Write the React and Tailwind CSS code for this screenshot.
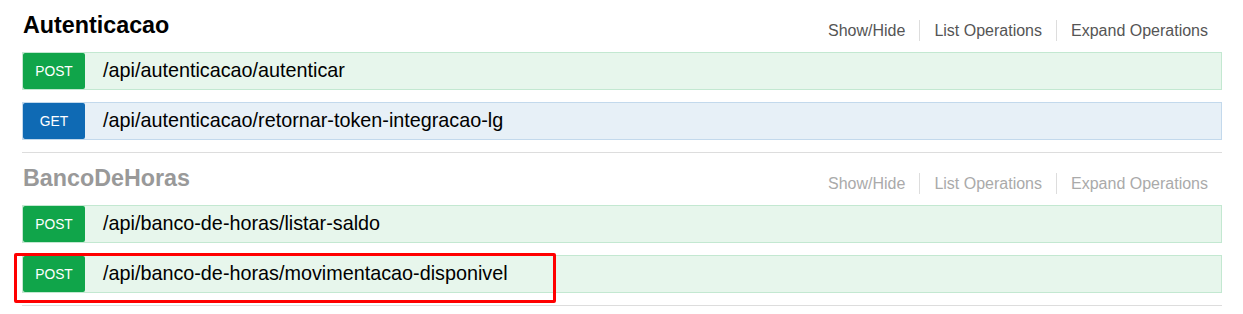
const sections = [
  {
    name: "Autenticacao",
    active: true,
    ops: [
      { method: "POST", path: "/api/autenticacao/autenticar" },
      { method: "GET", path: "/api/autenticacao/retornar-token-integracao-lg" },
    ],
  },
  {
    name: "BancoDeHoras",
    active: false,
    ops: [
      { method: "POST", path: "/api/banco-de-horas/listar-saldo" },
      { method: "POST", path: "/api/banco-de-horas/movimentacao-disponivel", marked: true },
    ],
  },
];

const Operation = ({ method, path, marked }) => {
  const isGet = method === "GET";
  return (
    <div
      className={
        "relative flex items-stretch h-[38px] border " +
        (isGet ? "bg-[#e7f0f7] border-[#c3d9ec]" : "bg-[#e7f6ec] border-[#c3e8d1]")
      }
    >
      <span
        className={
          "flex items-center justify-center w-[62px] pt-[2px] rounded-[2px] text-white text-[13.8px] " +
          (isGet ? "bg-[#0f6ab4]" : "bg-[#10a54a]")
        }
      >
        {method}
      </span>
      <span className="flex items-center pl-[18px] text-[19.8px] text-black">{path}</span>
      {/* annotation box */}
      {marked && (
        <div className="absolute -left-[9px] -top-[3px] w-[542px] h-[50px] border-[3px] border-[#ff0000] rounded-[2px]" />
      )}
    </div>
  );
};

const Section = ({ name, active, ops }) => {
  const links = ["Show/Hide", "List Operations", "Expand Operations"];
  return (
    <div className="border-b border-[#dddddd] pb-[12px]">
      <div className="flex justify-between h-[52px]">
        <h2
          className={
            "pt-[12px] pl-[1px] text-[23.3px] leading-[26px] font-bold " +
            (active ? "text-black" : "text-[#999999]")
          }
        >
          {name}
        </h2>
        <ul className="flex items-start pt-[20px]">
          {links.map((l, i) => (
            <li
              key={l}
              className={
                "px-[14px] h-[21px] text-[16px] leading-[21px] " +
                (i > 0 ? "border-l border-[#dddddd] " : "") +
                (active ? "text-[#555555]" : "text-[#aaaaaa]")
              }
            >
              {l}
            </li>
          ))}
        </ul>
      </div>
      <div className="flex flex-col gap-[12px]">
        {ops.map((op) => (
          <Operation key={op.path} {...op} />
        ))}
      </div>
    </div>
  );
};

export default function App() {
  return (
    <div className="w-[1243px] h-[314px] bg-white pl-[22px] overflow-hidden font-['Liberation_Sans',Arial,sans-serif]">
      <div className="w-[1200px]">
        {sections.map((s) => (
          <Section key={s.name} {...s} />
        ))}
      </div>
    </div>
  );
}
